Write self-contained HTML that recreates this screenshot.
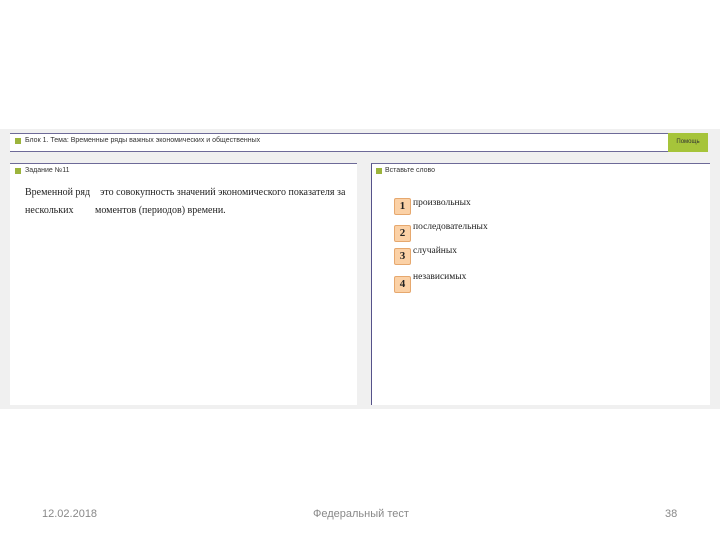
<!DOCTYPE html>
<html><head><meta charset="utf-8"><style>
body{margin:0;width:720px;height:540px;background:#fff;position:relative;overflow:hidden;font-family:"Liberation Sans",sans-serif}
.bg{position:absolute;left:0;top:129px;width:720px;height:280px;background:#f0f0f0}
.hdr{position:absolute;left:10px;top:133px;width:658px;height:17px;background:#fff;border-top:1px solid #6d6a98;border-bottom:1px solid #6d6a98}
.sq{position:absolute;width:6px;height:6px;background:#9cb43c}
.t{position:absolute;font-size:7px;color:#333;white-space:nowrap}
.btn{position:absolute;left:668px;top:133px;width:40px;height:19px;background:#a6c43a;font-size:6px;color:#333;text-align:center;line-height:19px}
.p{position:absolute;background:#fff;border-top:1px solid #6d6a98}
.serif{font-family:"Liberation Serif",serif;font-size:10px;color:#222;position:absolute;white-space:nowrap}
.num{position:absolute;left:394px;width:15px;height:15px;background:#fbd1a6;border:1px solid #e6a86e;border-radius:2px;font-family:"Liberation Serif",serif;font-weight:bold;font-size:11px;text-align:center;line-height:15px;color:#222}
.f{position:absolute;top:508px;font-size:11px;color:#888}
</style></head><body>
<div class="bg"></div>
<div class="hdr"></div>
<div class="sq" style="left:15px;top:138px"></div>
<div class="t" style="left:25px;top:137px">Блок 1. Тема: Временные ряды важных экономических и общественных</div>
<div class="btn">Помощь</div>
<div class="p" style="left:10px;top:163px;width:347px;height:241px"></div>
<div class="p" style="left:371px;top:163px;width:338px;height:241px;border-left:1px solid #55528a"></div>
<div class="sq" style="left:15px;top:168px"></div>
<div class="t" style="left:25px;top:167px">Задание №11</div>
<div class="sq" style="left:376px;top:168px"></div>
<div class="t" style="left:385px;top:167px">Вставьте слово</div>
<div class="serif" style="left:25px;top:187px">Временной ряд &nbsp;&nbsp; это совокупность значений экономического показателя за</div>
<div class="serif" style="left:25px;top:205px">нескольких</div>
<div class="serif" style="left:95px;top:205px">моментов (периодов) времени.</div>
<div class="num" style="top:198px">1</div><div class="serif" style="left:413px;top:198px;font-size:9.5px">произвольных</div>
<div class="num" style="top:225px">2</div><div class="serif" style="left:413px;top:222px;font-size:9.5px">последовательных</div>
<div class="num" style="top:248px">3</div><div class="serif" style="left:413px;top:246px;font-size:9.5px">случайных</div>
<div class="num" style="top:276px">4</div><div class="serif" style="left:413px;top:272px;font-size:9.5px">независимых</div>
<div class="f" style="left:42px">12.02.2018</div>
<div class="f" style="left:313px">Федеральный тест</div>
<div class="f" style="left:665px">38</div>
</body></html>
